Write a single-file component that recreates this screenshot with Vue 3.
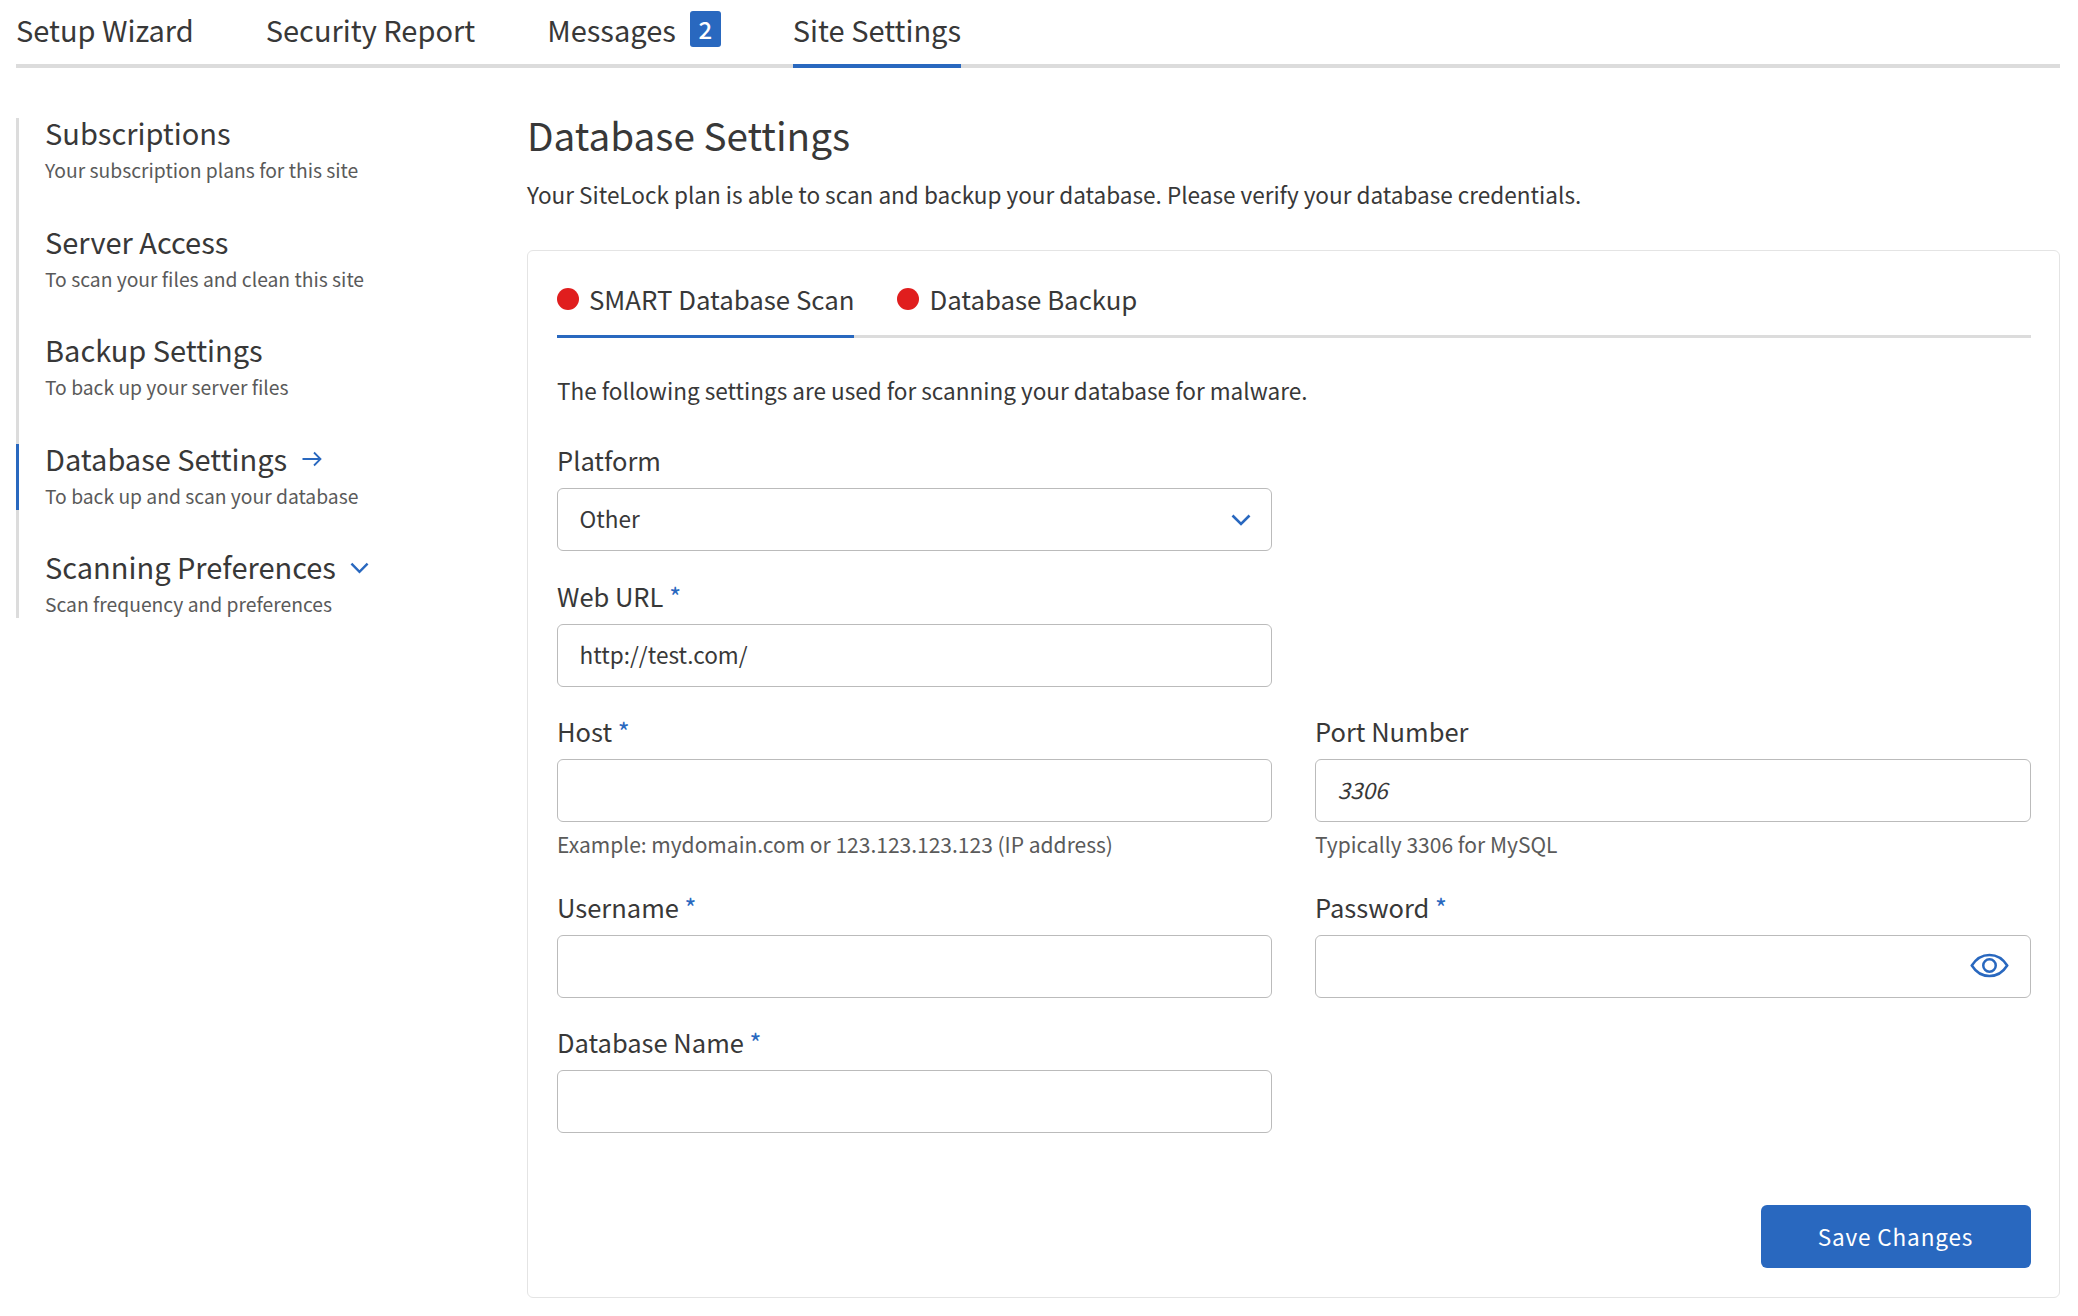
<script setup>
const tabs = [
  { label: 'Setup Wizard' },
  { label: 'Security Report' },
  { label: 'Messages', badge: 2 },
  { label: 'Site Settings', active: true },
]
const side = [
  { title: 'Subscriptions', sub: 'Your subscription plans for this site' },
  { title: 'Server Access', sub: 'To scan your files and clean this site' },
  { title: 'Backup Settings', sub: 'To back up your server files' },
  { title: 'Database Settings', sub: 'To back up and scan your database', active: true, icon: 'arrow' },
  { title: 'Scanning Preferences', sub: 'Scan frequency and preferences', icon: 'chev' },
]
</script>

<template>
  <div class="page">
    <nav class="tabs">
      <a v-for="t in tabs" :key="t.label" class="tab" :class="{ on: t.active }">
        {{ t.label }}<span v-if="t.badge" class="badge">{{ t.badge }}</span>
      </a>
    </nav>
    <div class="body">
      <aside class="side">
        <div v-for="s in side" :key="s.title" class="sitem" :class="{ on: s.active }">
          <div class="stitle">
            {{ s.title }}
            <svg v-if="s.icon === 'arrow'" class="sarrow" viewBox="0 0 20 16" fill="none">
              <path d="M0.5 8H18.5M12 1.5L18.5 8L12 14.5" stroke="#2968bf" stroke-width="1.8" />
            </svg>
            <svg v-if="s.icon === 'chev'" class="schev" viewBox="0 0 20 12" fill="none">
              <path d="M1.5 1.5L10 10L18.5 1.5" stroke="#2968bf" stroke-width="2.6" />
            </svg>
          </div>
          <div class="ssub">{{ s.sub }}</div>
        </div>
      </aside>
      <main class="main">
        <h1>Database Settings</h1>
        <p class="lead">Your SiteLock plan is able to scan and backup your database. Please verify your database credentials.</p>
        <section class="card">
          <div class="ctabs">
            <div class="ctab on"><i class="dot"></i>SMART Database Scan</div>
            <div class="ctab"><i class="dot"></i>Database Backup</div>
          </div>
          <p class="intro">The following settings are used for scanning your database for malware.</p>
          <div class="form">
            <div class="field">
              <label>Platform</label>
              <div class="selectwrap">
                <select class="ctl"><option>Other</option></select>
                <svg class="selchev" viewBox="0 0 20 12" fill="none">
                  <path d="M1.5 1.5L10 10L18.5 1.5" stroke="#2968bf" stroke-width="2.6" />
                </svg>
              </div>
            </div>
            <div class="field">
              <label>Web URL <b>*</b></label>
              <input class="ctl" value="http://test.com/" />
            </div>
            <div class="field">
              <label>Host <b>*</b></label>
              <input class="ctl" />
              <small>Example: mydomain.com or 123.123.123.123 (IP address)</small>
            </div>
            <div class="field right">
              <label>Port Number</label>
              <input class="ctl" placeholder="3306" />
              <small>Typically 3306 for MySQL</small>
            </div>
            <div class="field">
              <label>Username <b>*</b></label>
              <input class="ctl" />
            </div>
            <div class="field right">
              <label>Password <b>*</b></label>
              <div class="selectwrap">
                <input class="ctl" type="password" />
                <svg class="eye" viewBox="0 0 40 26" fill="none" stroke="#2968bf" stroke-width="2.6">
                  <path d="M1.6 13C6 6 12.5 2 20 2S34 6 38.4 13C34 20 27.5 24 20 24S6 20 1.6 13Z" />
                  <circle cx="20" cy="13" r="6.5" />
                </svg>
              </div>
            </div>
            <div class="field">
              <label>Database Name <b>*</b></label>
              <input class="ctl" />
            </div>
          </div>
          <div class="actions"><button class="save">Save Changes</button></div>
        </section>
      </main>
    </div>
  </div>
</template>

<style scoped>
.page {
  font-family: "Noto Sans CJK SC", "Source Sans Pro", sans-serif;
  color: #383838;
  padding: 0 18px 19px 16px;
  box-sizing: border-box;
  width: 2078px;
  height: 1316px;
  overflow: hidden;
}
.tabs {
  display: flex;
  gap: 72px;
  height: 68px;
  border-bottom: 4px solid #dcdcdc;
  box-sizing: border-box;
}
.tab {
  display: flex;
  align-items: center;
  height: 68px;
  padding-bottom: 7px;
  box-sizing: border-box;
  font-size: 29px;
  line-height: 40px;
  border-bottom: 4px solid transparent;
}
.tab.on {
  border-bottom-color: #2968bf;
}
.badge {
  display: flex;
  align-items: center;
  justify-content: center;
  width: 31px;
  height: 36px;
  margin-left: 14px;
  border-radius: 3px;
  background: #2968bf;
  color: #fff;
  font-size: 24px;
  font-weight: 500;
  line-height: 36px;
}
.body {
  display: flex;
  margin-top: 50px;
}
.side {
  width: 511px;
  flex: none;
  height: 500px;
  border-left: 3px solid #dcdcdc;
  box-sizing: border-box;
}
.sitem {
  display: flow-root;
  height: 108.6px;
  margin-left: -3px;
  padding-left: 26px;
  border-left: 3px solid transparent;
  box-sizing: border-box;
}
.sitem:nth-child(4) {
  height: 66px;
  margin-bottom: 42.6px;
}
.sitem.on {
  border-left-color: #2968bf;
}
.stitle {
  display: flex;
  align-items: center;
  height: 34px;
  margin-top: -3px;
  font-size: 29px;
  line-height: 34px;
}
.ssub {
  margin-top: 7px;
  font-size: 19.3px;
  line-height: 28px;
  color: #5a5a5a;
}
.sarrow {
  width: 20px;
  height: 16px;
  margin: 2px 0 0 15px;
}
.schev {
  width: 19px;
  height: 12px;
  margin: 4px 0 0 14px;
}
.main {
  flex: 1;
  min-width: 0;
}
h1 {
  margin: -3px 0 0;
  font-size: 38.7px;
  font-weight: 400;
  line-height: 38px;
}
.lead {
  margin: 24.5px 0 0;
  font-size: 22.55px;
  line-height: 32px;
}
.card {
  margin-top: 40.5px;
  height: 1048px;
  padding: 0 28.5px 0 29px;
  border: 1.5px solid #e4e4e4;
  border-radius: 6px;
  box-sizing: border-box;
}
.ctabs {
  display: flex;
  gap: 43px;
  height: 87px;
  border-bottom: 3px solid #dcdcdc;
  box-sizing: border-box;
}
.ctab {
  display: flex;
  align-items: center;
  height: 87px;
  padding-top: 12px;
  box-sizing: border-box;
  font-size: 25.8px;
  line-height: 40px;
  border-bottom: 3px solid transparent;
}
.ctab.on {
  border-bottom-color: #2968bf;
}
.dot {
  width: 22px;
  height: 22px;
  margin-right: 10px;
  border-radius: 50%;
  background: #e01e1e;
}
.intro {
  margin: 36px 0 0;
  font-size: 22.55px;
  line-height: 32px;
}
.form {
  display: grid;
  grid-template-columns: 715px 716px;
  column-gap: 43px;
  margin-top: 37px;
}
.field {
  grid-column: 1;
  display: flex;
  flex-direction: column;
  padding-bottom: 27.5px;
}
.field.right {
  grid-column: 2;
}
label {
  height: 36px;
  margin-bottom: 9px;
  font-size: 25.5px;
  line-height: 34px;
}
label b {
  color: #2968bf;
  font-weight: 400;
}
.selectwrap {
  position: relative;
  height: 63px;
}
.ctl {
  display: block;
  width: 100%;
  height: 63px;
  padding: 0 22px 3px 21.5px;
  border: 1.5px solid #bbb;
  border-radius: 6px;
  background: #fff;
  box-sizing: border-box;
  font: 22.55px/32px "Noto Sans CJK SC", "Source Sans Pro", sans-serif;
  color: #383838;
  appearance: none;
  outline: none;
}
.ctl::placeholder {
  font-style: italic;
  color: #383838;
  opacity: 1;
}
.selchev {
  position: absolute;
  right: 21px;
  top: 26px;
  width: 20px;
  height: 12px;
}
.eye {
  position: absolute;
  right: 22px;
  top: 18px;
  width: 39px;
  height: 25px;
}
small {
  margin-top: 8px;
  margin-bottom: 4px;
  font-size: 21px;
  line-height: 28px;
  color: #5a5a5a;
}
.actions {
  display: flex;
  justify-content: flex-end;
  margin-top: 44px;
}
.save {
  width: 270px;
  height: 63px;
  border: 0;
  border-radius: 6px;
  background: #2968bf;
  color: #fff;
  font: 22.55px/32px "Noto Sans CJK SC", "Source Sans Pro", sans-serif;
  letter-spacing: 0.85px;
}
</style>
